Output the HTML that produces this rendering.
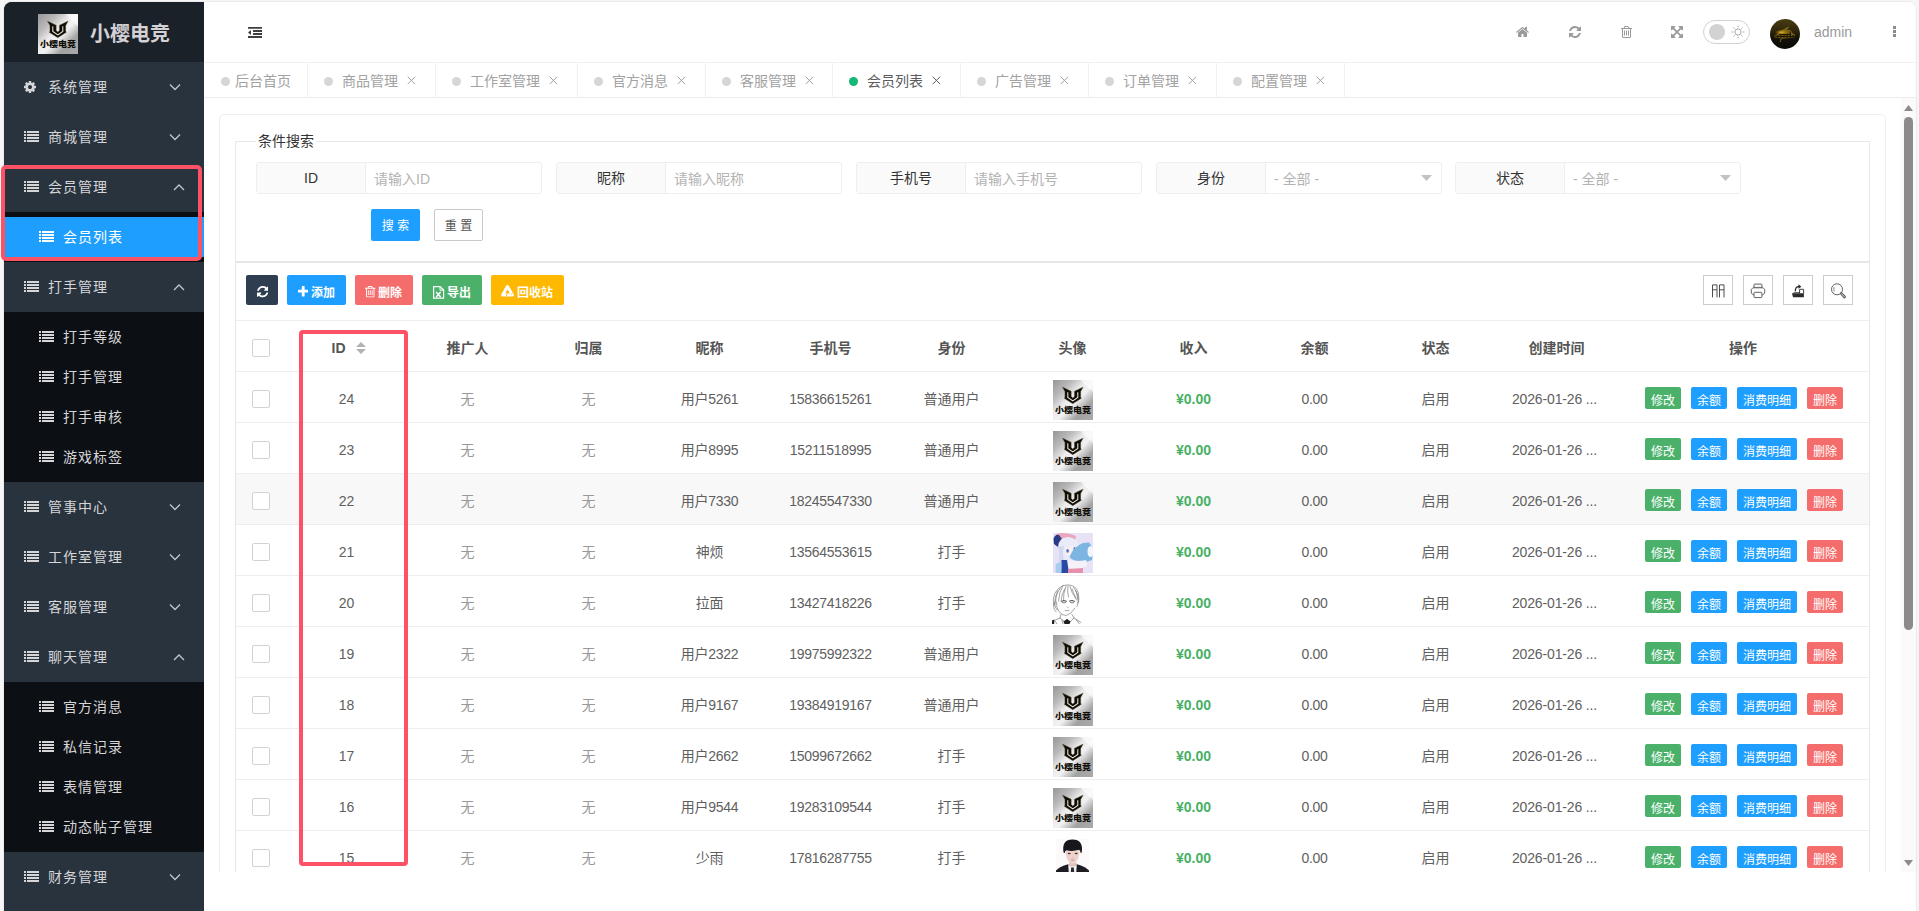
<!DOCTYPE html>
<html lang="zh-CN">
<head>
<meta charset="utf-8">
<title>小樱电竞 - 会员列表</title>
<style>
*{box-sizing:border-box;margin:0;padding:0}
html,body{width:1919px;height:911px;overflow:hidden;background:#f6f6f6}
body{font-family:"Liberation Sans","Noto Sans CJK SC",sans-serif;font-size:14px;color:#5f5f5f;position:relative}
ul{list-style:none}
svg{display:block}
.abs{position:absolute}
/* window frame */
#win{position:absolute;left:4px;top:2px;width:1912px;height:915px;background:#fff;border-radius:8px 8px 0 0;overflow:hidden;box-shadow:0 0 0 1px #ebebeb}
/* ---------- sidebar ---------- */
#side{position:absolute;left:0;top:0;width:200px;height:915px;background:#28333e;color:#d6d5d8}
#logo{height:60px;background:#1b2129;position:relative}
#logo .limg{position:absolute;left:34px;top:12px;width:40px;height:40px}
#logo h1{position:absolute;left:86px;top:2px;line-height:60px;font-size:20px;font-weight:bold;color:#d3d1d4;letter-spacing:0;white-space:nowrap}
.nav-item{position:relative;height:50px;line-height:50px;font-size:14px;letter-spacing:1px;white-space:nowrap}
.nav-item .t{position:absolute;left:44px;top:0}
.nav-item .ic{position:absolute;left:20px;top:19px}
.nav-item .chev{position:absolute;top:21px;width:12px;height:10px;color:#c4c6c9}
.nav-item .chev.down{left:165px;top:20px}
.nav-item .chev.up{left:169px}
.nav-child{background:#0c0f13;padding:5px 0}
.nav-child li{position:relative;height:40px;line-height:40px;letter-spacing:1px;white-space:nowrap}
.nav-child li .t{position:absolute;left:59px;top:0}
.nav-child li .ic{position:absolute;left:35px;top:14px}
.nav-child li.on{background:#1e9fff;color:#fff}
.ic{width:15px;height:11px;display:block;position:relative}
.ic:before,.ic:after{content:"";position:absolute;top:0;height:11px;background:repeating-linear-gradient(to bottom,currentColor 0,currentColor 2px,transparent 2px,transparent 3px)}
.ic:before{left:0;width:2.3px}
.ic:after{left:3px;width:11.7px}
/* ---------- header ---------- */
#head{position:absolute;left:200px;top:0;width:1712px;height:61px;background:#fff;border-bottom:1px solid #f1f1f1}
#tabs{position:absolute;left:200px;top:61px;width:1712px;height:35px;background:#fff;border-bottom:1px solid #ececec;box-shadow:0 1px 2px rgba(0,0,0,.04)}
.tab{position:absolute;top:0;height:34px;line-height:36px;border-right:1px solid #f1f1f1;color:#a2a2a2;font-size:14px;white-space:nowrap}
.tab .dot{position:absolute;top:14px;width:9px;height:9px;border-radius:50%;background:#d6d6d6}
.tab .tt{position:absolute;top:0}
.tab .x{position:absolute;top:13px;width:9px;height:9px}
.tab.on{color:#5c5c5c}
.tab.on .dot{background:#16b777}
/* ---------- body ---------- */
#main{position:absolute;left:200px;top:96px;width:1697px;height:774px;background:#fff;overflow:hidden}
#sbar{position:absolute;left:1897px;top:96px;width:15px;height:774px;background:#fafafa}
#sbar .thumb{position:absolute;left:3px;top:19px;width:9px;height:513px;border-radius:5px;background:#8b8b8b}
#card{position:absolute;left:15px;top:16px;width:1667px;height:900px;border:1px solid #eee;border-radius:5px;background:#fff}

.fs{border:1px solid #e8e8e8;border-bottom:1px solid #e6e6e6}
.legend{background:#fff;padding:0 2px;font-size:14px;line-height:22px;color:#333}
.grp{width:286px;height:32px;border:1px solid #eee;border-radius:3px;background:#fff}
.grp .lab{position:absolute;left:0;top:0;width:109px;height:30px;line-height:31px;text-align:center;background:#fafafa;border-right:1px solid #eee;color:#333;font-size:14px}
.grp .ph{position:absolute;left:117px;top:0;line-height:33px;color:#b3b3b3;font-size:14px;white-space:nowrap}
.btn-s{width:49px;height:32px;line-height:34px;background:#1e9fff;color:#fff;font-size:12px;text-align:center;border-radius:2px;white-space:nowrap}
.btn-r{width:49px;height:32px;line-height:32px;background:#fff;border:1px solid #c9c9c9;color:#555;font-size:12px;text-align:center;border-radius:2px;white-space:nowrap}
.tv{border:1px solid #e6e6e6;border-bottom:none}
.tb{height:30px;border-radius:2px;color:#fff}
.tb .bt{top:0;line-height:37px;font-size:12px;font-weight:bold;white-space:nowrap}
.tool{width:30px;height:30px;border:1px solid #ccc;background:#fff}
.hl{height:1px;background:#eee}
.c{text-align:center;white-space:nowrap;font-size:14px;color:#5f5f5f;overflow:hidden}
.c.th{font-weight:bold;color:#555}
.c.mut{color:#999}
.c.num{letter-spacing:-0.3px}
.c.num2{letter-spacing:-0.15px}
.c.inc{color:#47b065;font-weight:bold}
.cb{position:absolute;left:16px;top:18px;width:18px;height:18px;border:1px solid #d2d2d2;border-radius:2px;background:#fff}
.op{position:absolute;top:15px;height:22px;line-height:28px;border-radius:2px;color:#fff;font-size:12px;text-align:center}
.annot{position:absolute;border:4px solid #fd5266;pointer-events:none}
</style>
</head>
<body>
<div id="win">
  <div id="side">
    <div id="logo"><span class="limg"><svg class="" width="40" height="40" viewBox="0 0 40 40"><defs><linearGradient id="lg1" x1="0" y1="0" x2="1" y2="1"><stop offset="0" stop-color="#969696"/><stop offset="0.25" stop-color="#bababa"/><stop offset="0.44" stop-color="#ededed"/><stop offset="0.56" stop-color="#f1f1f1"/><stop offset="0.76" stop-color="#a2a2a2"/><stop offset="1" stop-color="#aaaaaa"/></linearGradient></defs><rect width="40" height="40" fill="url(#lg1)"/><path d="M27.5 0H40V12Z" fill="#fff" opacity="0.6"/><path d="M9.4 7 L18.2 11.2 V16.4 L19.8 17.9 L21.4 16.4 V11.2 L30.2 7 L27.7 11.6 V17.3 L28.4 18.3 L19.8 23.8 L11.2 18.3 L11.9 17.3 V11.6 Z" fill="#0e0c07" stroke="#6b5d3a" stroke-width="0.4"/><path d="M14.8 12.2 V17.5 L19.8 20.9 L24.8 17.5 V12.2" fill="none" stroke="#efe9d8" stroke-width="1.05"/><text x="20" y="33.3" text-anchor="middle" font-family="Noto Sans CJK SC, sans-serif" font-weight="900" font-size="8" textLength="36" lengthAdjust="spacingAndGlyphs" fill="#100d07">小樱电竞</text></svg></span><h1>小樱电竞</h1></div>
    <ul id="nav"><li class="nav-item"><span class="abs" style="left:20px;top:18px"><svg width="12.0" height="14" viewBox="128 0 1536 1792" style=""><path d="M1152 896q0-106-75-181t-181-75-181 75-75 181 75 181 181 75 181-75 75-181zm512-109v222q0 12-8 23t-20 13l-185 28q-19 54-39 91 35 50 107 138 10 12 10 25t-9 23q-27 37-99 108t-94 71q-12 0-26-9l-138-108q-44 23-91 38-16 136-29 186-7 28-36 28h-222q-14 0-24.500-8.500t-11.500-21.500l-28-184q-49-16-90-37l-141 107q-10 9-25 9-14 0-25-11-126-114-165-168-7-10-7-23 0-12 8-23 15-21 51-66.500t54-70.500q-27-50-41-99l-183-27q-13-2-21-12.500t-8-23.500v-222q0-12 8-23t19-13l186-28q14-46 39-92-40-57-107-138-10-12-10-24 0-10 9-23 26-36 98.500-107.500t94.500-71.500q13 0 26 10l138 107q44-23 91-38 16-136 29-186 7-28 36-28h222q14 0 24.500 8.500t11.500 21.500l28 184q49 16 90 37l142-107q9-9 24-9 13 0 25 10 129 119 165 170 7 8 7 22 0 12-8 23-15 21-51 66.500t-54 70.500q26 50 41 98l183 28q13 2 21 12.500t8 23.500z" fill="currentColor"/></svg></span><span class="t">系统管理</span><span class="chev down"><svg width="12" height="10" viewBox="0 0 12 10"><path d="M1 2.5 L6 7.5 L11 2.5" fill="none" stroke="currentColor" stroke-width="1.3"/></svg></span></li><li class="nav-item"><i class="ic"></i><span class="t">商城管理</span><span class="chev down"><svg width="12" height="10" viewBox="0 0 12 10"><path d="M1 2.5 L6 7.5 L11 2.5" fill="none" stroke="currentColor" stroke-width="1.3"/></svg></span></li><li class="nav-item"><i class="ic"></i><span class="t">会员管理</span><span class="chev up"><svg width="12" height="10" viewBox="0 0 12 10"><path d="M1 7 L6 2 L11 7" fill="none" stroke="currentColor" stroke-width="1.3"/></svg></span></li><li><ul class="nav-child"><li class="on"><i class="ic"></i><span class="t">会员列表</span></li></ul></li><li class="nav-item"><i class="ic"></i><span class="t">打手管理</span><span class="chev up"><svg width="12" height="10" viewBox="0 0 12 10"><path d="M1 7 L6 2 L11 7" fill="none" stroke="currentColor" stroke-width="1.3"/></svg></span></li><li><ul class="nav-child"><li><i class="ic"></i><span class="t">打手等级</span></li><li><i class="ic"></i><span class="t">打手管理</span></li><li><i class="ic"></i><span class="t">打手审核</span></li><li><i class="ic"></i><span class="t">游戏标签</span></li></ul></li><li class="nav-item"><i class="ic"></i><span class="t">管事中心</span><span class="chev down"><svg width="12" height="10" viewBox="0 0 12 10"><path d="M1 2.5 L6 7.5 L11 2.5" fill="none" stroke="currentColor" stroke-width="1.3"/></svg></span></li><li class="nav-item"><i class="ic"></i><span class="t">工作室管理</span><span class="chev down"><svg width="12" height="10" viewBox="0 0 12 10"><path d="M1 2.5 L6 7.5 L11 2.5" fill="none" stroke="currentColor" stroke-width="1.3"/></svg></span></li><li class="nav-item"><i class="ic"></i><span class="t">客服管理</span><span class="chev down"><svg width="12" height="10" viewBox="0 0 12 10"><path d="M1 2.5 L6 7.5 L11 2.5" fill="none" stroke="currentColor" stroke-width="1.3"/></svg></span></li><li class="nav-item"><i class="ic"></i><span class="t">聊天管理</span><span class="chev up"><svg width="12" height="10" viewBox="0 0 12 10"><path d="M1 7 L6 2 L11 7" fill="none" stroke="currentColor" stroke-width="1.3"/></svg></span></li><li><ul class="nav-child"><li><i class="ic"></i><span class="t">官方消息</span></li><li><i class="ic"></i><span class="t">私信记录</span></li><li><i class="ic"></i><span class="t">表情管理</span></li><li><i class="ic"></i><span class="t">动态帖子管理</span></li></ul></li><li class="nav-item"><i class="ic"></i><span class="t">财务管理</span><span class="chev down"><svg width="12" height="10" viewBox="0 0 12 10"><path d="M1 2.5 L6 7.5 L11 2.5" fill="none" stroke="currentColor" stroke-width="1.3"/></svg></span></li></ul>
  </div>
  <div id="head"><svg class="abs" style="left:44px;top:25px" width="14" height="11" viewBox="0 0 14 11"><path d="M0 0H14V1.8H0Z M5 3.1H14V4.9H5Z M5 6.1H14V7.9H5Z M0 9.1H14V10.9H0Z M0 5.5 L3 3 V8Z" fill="#3f3f3f"/></svg><span class="abs" style="left:1311.5px;top:23px;color:#9a9a9a"><svg width="13.0" height="14" viewBox="64 0 1664 1792" style=""><path d="M1472 992v480q0 26-19 45t-45 19h-384v-384h-256v384h-384q-26 0-45-19t-19-45v-480q0-1 .5-3t.5-3l575-474 575 474q1 2 1 6zm223-69l-62 74q-8 9-21 11h-3q-13 0-21-7l-692-577-692 577q-12 8-24 7-13-2-21-11l-62-74q-8-10-7-23.5t11-21.5l719-599q32-26 76-26t76 26l244 204v-195q0-14 9-23t23-9h192q14 0 23 9t9 23v408l219 182q10 8 11 21.5t-7 23.5z" fill="currentColor"/></svg></span><span class="abs" style="left:1364.5px;top:23px;color:#9a9a9a"><svg width="12.0" height="14" viewBox="128 0 1536 1792" style=""><path d="M1639 1056q0 5-1 7-64 268-268 434.5t-478 166.5q-146 0-282.500-55t-243.500-157l-129 129q-19 19-45 19t-45-19-19-45v-448q0-26 19-45t45-19h448q26 0 45 19t19 45-19 45l-137 137q71 66 161 102t187 36q134 0 250-65t186-179q11-17 53-117 8-23 30-23h192q13 0 22.500 9.500t9.500 22.500zm25-800v448q0 26-19 45t-45 19h-448q-26 0-45-19t-19-45 19-45l138-138q-148-137-349-137-134 0-250 65t-186 179q-11 17-53 117-8 23-30 23h-199q-13 0-22.500-9.500t-9.500-22.500v-7q65-268 270-434.500t480-166.500q146 0 284 55.500t245 156.500l130-129q19-19 45-19t45 19 19 45z" fill="currentColor"/></svg></span><span class="abs" style="left:1416.5px;top:23px;color:#9a9a9a"><svg width="11.0" height="14" viewBox="192 0 1408 1792" style=""><path d="M704 736v576q0 14-9 23t-23 9h-64q-14 0-23-9t-9-23v-576q0-14 9-23t23-9h64q14 0 23 9t9 23zm256 0v576q0 14-9 23t-23 9h-64q-14 0-23-9t-9-23v-576q0-14 9-23t23-9h64q14 0 23 9t9 23zm256 0v576q0 14-9 23t-23 9h-64q-14 0-23-9t-9-23v-576q0-14 9-23t23-9h64q14 0 23 9t9 23zm128 724v-948h-896v948q0 22 7 40.500t14.500 27 10.500 8.500h832q3 0 10.500-8.500t14.500-27 7-40.500zm-672-1076h448l-48-117q-7-9-17-11h-317q-10 2-17 11zm928 32v64q0 14-9 23t-23 9h-96v948q0 83-47 143.500t-113 60.500h-832q-66 0-113-58.500t-47-141.500v-952h-96q-14 0-23-9t-9-23v-64q0-14 9-23t23-9h309l70-167q15-37 54-63t79-26h320q40 0 79 26t54 63l70 167h309q14 0 23 9t9 23z" fill="currentColor"/></svg></span><span class="abs" style="left:1466.5px;top:24px;color:#9a9a9a"><svg width="14.0" height="14" viewBox="0 0 1792 1792" style=""><path d="M1283 413l-355 355 355 355 144-144q29-31 70-14 39 17 39 59v448q0 26-19 45t-45 19h-448q-42 0-59-40-17-39 14-69l144-144-355-355-355 355 144 144q31 30 14 69-17 40-59 40h-448q-26 0-45-19t-19-45v-448q0-42 40-59 39-17 69 14l144 144 355-355-355-355-144 144q-19 19-45 19-12 0-24-5-40-17-40-59v-448q0-26 19-45t45-19h448q42 0 59 40 17 39-14 69l-144 144 355 355 355-355-144-144q-31-30-14-69 17-40 59-40h448q26 0 45 19t19 45v448q0 42-39 59-13 5-25 5-26 0-45-19z" fill="currentColor"/></svg></span><div class="abs" style="left:1499px;top:18px;width:47px;height:24px;border:1px solid #d2d2d2;border-radius:12px;background:#fff"><span class="abs" style="left:5px;top:3px;width:16px;height:16px;border-radius:50%;background:#d2d2d2"></span><svg class="abs" style="left:27px;top:4px" width="14" height="14" viewBox="0 0 14 14"><circle cx="7" cy="7" r="3.1" fill="none" stroke="#9a9a9a" stroke-width="0.9"/><path d="M7 0.6V2.2 M7 11.8V13.4 M0.6 7H2.2 M11.8 7H13.4 M2.5 2.5L3.6 3.6 M10.4 10.4L11.5 11.5 M2.5 11.5L3.6 10.4 M10.4 3.6L11.5 2.5" stroke="#9a9a9a" stroke-width="0.9"/></svg></div><span class="abs" style="left:1566px;top:17px"><svg width="30" height="30" viewBox="0 0 30 30"><defs><linearGradient id="adl" x1="0" y1="0" x2="0" y2="1"><stop offset="0" stop-color="#4a3c12"/><stop offset="0.4" stop-color="#2e260c"/><stop offset="0.62" stop-color="#15120a"/><stop offset="1" stop-color="#0a0906"/></linearGradient><radialGradient id="adg" cx="0.5" cy="0.5" r="0.5"><stop offset="0" stop-color="#ffe45a"/><stop offset="0.3" stop-color="#e0aa18" stop-opacity="0.95"/><stop offset="1" stop-color="#8a6a10" stop-opacity="0"/></radialGradient><filter id="adb"><feGaussianBlur stdDeviation="0.5"/></filter><clipPath id="adc"><circle cx="15" cy="15" r="15"/></clipPath></defs><circle cx="15" cy="15" r="15" fill="url(#adl)"/><g clip-path="url(#adc)" filter="url(#adb)"><ellipse cx="11.8" cy="13.6" rx="7" ry="3.4" fill="url(#adg)" opacity="0.9"/><path d="M12 11 L18.5 7.6 L19 8.6 L17 10.5 L21 11.5 L22.5 14 L25 15.5 L24.8 18.5 L20 19 L12 20 L10.5 23.5 L9.5 23 L10.8 19.5 L4.5 18.6 L4.5 16.2 L9 14.5 Z" fill="#b08a1c" opacity="0.55"/><path d="M5 17.4 H25 M9 15.4 H21" stroke="#1a1406" stroke-width="1"/><path d="M8 16 V19 M11 16 V19.5 M14 15 V19.5 M17 15 V19.5 M20.3 12.5 V19 M23 16 V18.8" stroke="#1a1406" stroke-width="0.9"/></g></svg></span><span class="abs" style="left:1610px;top:0;line-height:60px;font-size:14px;color:#9a9a9a">admin</span><svg class="abs" style="left:1689px;top:24px" width="3" height="11" viewBox="0 0 3 11"><path d="M0 0H3V3H0Z M0 4H3V7H0Z M0 8H3V11H0Z" fill="#8a8a92"/></svg></div>
  <div id="tabs"><div class="tab" style="left:0px;width:104px"><i class="dot" style="left:17px"></i><span class="tt" style="left:31px">后台首页</span></div><div class="tab" style="left:104px;width:128px"><i class="dot" style="left:16px"></i><span class="tt" style="left:34px">商品管理</span><span class="x" style="left:99px"><svg width="9" height="9" viewBox="0 0 9 9"><path d="M0.7 0.7 L8.1 8.1 M8.1 0.7 L0.7 8.1" stroke="currentColor" stroke-width="1" fill="none"/></svg></span></div><div class="tab" style="left:232px;width:142px"><i class="dot" style="left:16px"></i><span class="tt" style="left:34px">工作室管理</span><span class="x" style="left:113px"><svg width="9" height="9" viewBox="0 0 9 9"><path d="M0.7 0.7 L8.1 8.1 M8.1 0.7 L0.7 8.1" stroke="currentColor" stroke-width="1" fill="none"/></svg></span></div><div class="tab" style="left:374px;width:128px"><i class="dot" style="left:16px"></i><span class="tt" style="left:34px">官方消息</span><span class="x" style="left:99px"><svg width="9" height="9" viewBox="0 0 9 9"><path d="M0.7 0.7 L8.1 8.1 M8.1 0.7 L0.7 8.1" stroke="currentColor" stroke-width="1" fill="none"/></svg></span></div><div class="tab" style="left:502px;width:127px"><i class="dot" style="left:16px"></i><span class="tt" style="left:34px">客服管理</span><span class="x" style="left:99px"><svg width="9" height="9" viewBox="0 0 9 9"><path d="M0.7 0.7 L8.1 8.1 M8.1 0.7 L0.7 8.1" stroke="currentColor" stroke-width="1" fill="none"/></svg></span></div><div class="tab on" style="left:629px;width:128px"><i class="dot" style="left:16px"></i><span class="tt" style="left:34px">会员列表</span><span class="x" style="left:99px"><svg width="9" height="9" viewBox="0 0 9 9"><path d="M0.7 0.7 L8.1 8.1 M8.1 0.7 L0.7 8.1" stroke="currentColor" stroke-width="1" fill="none"/></svg></span></div><div class="tab" style="left:757px;width:128px"><i class="dot" style="left:16px"></i><span class="tt" style="left:34px">广告管理</span><span class="x" style="left:99px"><svg width="9" height="9" viewBox="0 0 9 9"><path d="M0.7 0.7 L8.1 8.1 M8.1 0.7 L0.7 8.1" stroke="currentColor" stroke-width="1" fill="none"/></svg></span></div><div class="tab" style="left:885px;width:128px"><i class="dot" style="left:16px"></i><span class="tt" style="left:34px">订单管理</span><span class="x" style="left:99px"><svg width="9" height="9" viewBox="0 0 9 9"><path d="M0.7 0.7 L8.1 8.1 M8.1 0.7 L0.7 8.1" stroke="currentColor" stroke-width="1" fill="none"/></svg></span></div><div class="tab" style="left:1013px;width:128px"><i class="dot" style="left:16px"></i><span class="tt" style="left:34px">配置管理</span><span class="x" style="left:99px"><svg width="9" height="9" viewBox="0 0 9 9"><path d="M0.7 0.7 L8.1 8.1 M8.1 0.7 L0.7 8.1" stroke="currentColor" stroke-width="1" fill="none"/></svg></span></div></div>
  <div id="main">
    <div id="card"><div class="abs fs" style="left:15px;top:26px;width:1635px;height:121px"></div><div class="abs legend" style="left:36px;top:15px">条件搜索</div><div class="abs grp" style="left:36px;top:47px"><span class="lab">ID</span><span class="ph">请输入ID</span></div><div class="abs grp" style="left:336px;top:47px"><span class="lab">昵称</span><span class="ph">请输入昵称</span></div><div class="abs grp" style="left:636px;top:47px"><span class="lab">手机号</span><span class="ph">请输入手机号</span></div><div class="abs grp" style="left:936px;top:47px"><span class="lab">身份</span><span class="ph">- 全部 -</span><svg class="abs" style="left:264px;top:12px" width="11" height="6" viewBox="0 0 11 6"><path d="M0 0H11L5.5 6Z" fill="#c2c2c2"/></svg></div><div class="abs grp" style="left:1235px;top:47px"><span class="lab">状态</span><span class="ph">- 全部 -</span><svg class="abs" style="left:264px;top:12px" width="11" height="6" viewBox="0 0 11 6"><path d="M0 0H11L5.5 6Z" fill="#c2c2c2"/></svg></div><div class="abs btn-s" style="left:151px;top:94px">搜 索</div><div class="abs btn-r" style="left:214px;top:94px">重 置</div><div class="abs tv" style="left:15px;top:147px;width:1635px;height:700px"></div><div class="abs tb" style="left:26px;top:160px;width:32px;background:#2f3d50"><span class="abs" style="left:10.5px;top:10px;color:#fff"><svg width="11.4" height="13.3" viewBox="128 0 1536 1792" style=""><path d="M1639 1056q0 5-1 7-64 268-268 434.5t-478 166.5q-146 0-282.500-55t-243.500-157l-129 129q-19 19-45 19t-45-19-19-45v-448q0-26 19-45t45-19h448q26 0 45 19t19 45-19 45l-137 137q71 66 161 102t187 36q134 0 250-65t186-179q11-17 53-117 8-23 30-23h192q13 0 22.500 9.500t9.500 22.500zm25-800v448q0 26-19 45t-45 19h-448q-26 0-45-19t-19-45 19-45l138-138q-148-137-349-137-134 0-250 65t-186 179q-11 17-53 117-8 23-30 23h-199q-13 0-22.500-9.500t-9.500-22.500v-7q65-268 270-434.500t480-166.500q146 0 284 55.500t245 156.500l130-129q19-19 45-19t45 19 19 45z" fill="currentColor"/></svg></span></div><div class="abs tb" style="left:67px;top:160px;width:59px;background:#1e9fff"><span class="abs" style="left:11px;top:10.2px;color:#fff"><svg width="10.45" height="13.3" viewBox="192 0 1408 1792" style=""><path d="M1600 736v192q0 40-28 68t-68 28h-416v416q0 40-28 68t-68 28h-192q-40 0-68-28t-28-68v-416h-416q-40 0-68-28t-28-68v-192q0-40 28-68t68-28h416v-416q0-40 28-68t68-28h192q40 0 68 28t28 68v416h416q40 0 68 28t28 68z" fill="currentColor"/></svg></span><span class="abs bt" style="left:24px">添加</span></div><div class="abs tb" style="left:135px;top:160px;width:58px;background:#f56c6c"><span class="abs" style="left:10.2px;top:10.2px;color:#fff"><svg width="10.45" height="13.3" viewBox="192 0 1408 1792" style=""><path d="M704 736v576q0 14-9 23t-23 9h-64q-14 0-23-9t-9-23v-576q0-14 9-23t23-9h64q14 0 23 9t9 23zm256 0v576q0 14-9 23t-23 9h-64q-14 0-23-9t-9-23v-576q0-14 9-23t23-9h64q14 0 23 9t9 23zm256 0v576q0 14-9 23t-23 9h-64q-14 0-23-9t-9-23v-576q0-14 9-23t23-9h64q14 0 23 9t9 23zm128 724v-948h-896v948q0 22 7 40.500t14.500 27 10.500 8.500h832q3 0 10.500-8.500t14.500-27 7-40.500zm-672-1076h448l-48-117q-7-9-17-11h-317q-10 2-17 11zm928 32v64q0 14-9 23t-23 9h-96v948q0 83-47 143.500t-113 60.500h-832q-66 0-113-58.500t-47-141.500v-952h-96q-14 0-23-9t-9-23v-64q0-14 9-23t23-9h309l70-167q15-37 54-63t79-26h320q40 0 79 26t54 63l70 167h309q14 0 23 9t9 23z" fill="currentColor"/></svg></span><span class="abs bt" style="left:23px">删除</span></div><div class="abs tb" style="left:202px;top:160px;width:60px;background:#4bb16a"><span class="abs" style="left:10.5px;top:10.5px"><svg width="12" height="13" viewBox="0 0 12 13"><path d="M0.6 0.6H7.2L10.6 4V12.2H0.6Z" fill="none" stroke="#fff" stroke-width="1.2" stroke-linejoin="round"/><path d="M7 0.8V4.2H10.4" fill="none" stroke="#fff" stroke-width="1"/><path d="M3.2 5.9L7.6 11 M7.6 5.9L3.2 11" stroke="#fff" stroke-width="1.5"/></svg></span><span class="abs bt" style="left:25px">导出</span></div><div class="abs tb" style="left:271px;top:160px;width:73px;background:#ffb800"><span class="abs" style="left:10.2px;top:10px"><svg width="13" height="12" viewBox="0 0 13 12"><path d="M6.5 1.6L11.3 9.9H1.7Z" fill="none" stroke="#fff" stroke-width="3.1" stroke-linejoin="round"/><path d="M6.5 4.6L8.6 8.3H4.4Z" fill="#ffb800"/><path d="M8.6 2.2L10.6 1.4 M11.6 8.2L10 9.6 M2.4 5.4L0.6 6.6 M5.6 11.6V9" stroke="#ffb800" stroke-width="0.9"/></svg></span><span class="abs bt" style="left:26px">回收站</span></div><div class="abs tool" style="left:1483px;top:160px"><svg width="16" height="16" viewBox="0 0 16 16" class="abs" style="left:7px;top:7px"><g fill="none" stroke="#3a3a3a" stroke-width="0.9"><path d="M1.5 14.4V1.9H6V14.4 M1.5 6.8H6"/><path d="M8.5 14.4V1.9H13V14.4 M8.5 6.8H13"/></g></svg></div><div class="abs tool" style="left:1523px;top:160px"><svg width="16" height="16" viewBox="0 0 16 16" class="abs" style="left:6px;top:7px"><g fill="none" stroke="#5a5a5a" stroke-width="0.95"><path d="M4 4.4V1.6Q4 1.1 4.5 1.1H11.4Q11.9 1.1 11.9 1.6V4.4"/><path d="M3.3 4.4H12.7L14.7 6.4V10L12.7 12H11.9 M4 12H3.3L1.3 10V6.4L3.3 4.4"/><path d="M3 5.6H13" stroke="#c8c8c8"/><rect x="4" y="9.3" width="7.9" height="5.3" rx="0.7" fill="#fff"/></g></svg></div><div class="abs tool" style="left:1563px;top:160px"><svg width="16" height="16" viewBox="0 0 16 16" class="abs" style="left:6px;top:7px"><path d="M9.6 10.2V6.3H13.6V10.4" fill="none" stroke="#2b2b2b" stroke-width="0.9"/><path d="M1.9 10.2H13.9V14.2H3.1Z" fill="#2b2b2b"/><path d="M3.6 9.6H10" stroke="#2b2b2b" stroke-width="0.8"/><path d="M5.4 8.2Q5 3.8 9 3.5" fill="none" stroke="#2b2b2b" stroke-width="1.3"/><path d="M8.5 1.2L11.4 3.7L8.5 5.8Z" fill="#2b2b2b"/></svg></div><div class="abs tool" style="left:1603px;top:160px"><svg width="17" height="17" viewBox="0 0 17 17" class="abs" style="left:6px;top:6px"><circle cx="7" cy="7.3" r="5.5" fill="none" stroke="#505050" stroke-width="0.9"/><path d="M4.2 5.2Q3.4 7.3 4.2 9.4" fill="none" stroke="#505050" stroke-width="0.7"/><path d="M11.2 11.4L14.6 15" stroke="#505050" stroke-width="2.6" stroke-linecap="round"/><path d="M11.4 11.6L14.5 14.9" stroke="#fff" stroke-width="0.9" stroke-linecap="round"/></svg></div><div class="abs hl" style="left:16px;top:205px;width:1633px"></div><div class="abs c " style="left:16px;top:206px;width:50px;height:50px;line-height:54px"><i class="cb"></i></div><div class="abs c th" style="left:66px;top:206px;width:121px;height:50px;line-height:54px"><span style="position:relative;left:-8px">ID</span><svg class="abs" style="left:70px;top:21px" width="10" height="12" viewBox="0 0 10 12"><path d="M5 0L10 5H0Z M0 7H10L5 12Z" fill="#b2b2b2"/></svg></div><div class="abs c th" style="left:187px;top:206px;width:121px;height:50px;line-height:54px">推广人</div><div class="abs c th" style="left:308px;top:206px;width:121px;height:50px;line-height:54px">归属</div><div class="abs c th" style="left:429px;top:206px;width:121px;height:50px;line-height:54px">昵称</div><div class="abs c th" style="left:550px;top:206px;width:121px;height:50px;line-height:54px">手机号</div><div class="abs c th" style="left:671px;top:206px;width:121px;height:50px;line-height:54px">身份</div><div class="abs c th" style="left:792px;top:206px;width:121px;height:50px;line-height:54px">头像</div><div class="abs c th" style="left:913px;top:206px;width:121px;height:50px;line-height:54px">收入</div><div class="abs c th" style="left:1034px;top:206px;width:121px;height:50px;line-height:54px">余额</div><div class="abs c th" style="left:1155px;top:206px;width:121px;height:50px;line-height:54px">状态</div><div class="abs c th" style="left:1276px;top:206px;width:121px;height:50px;line-height:54px">创建时间</div><div class="abs c th" style="left:1397px;top:206px;width:252px;height:50px;line-height:54px">操作</div><div class="abs hl" style="left:16px;top:256px;width:1633px"></div><div class="abs c " style="left:16px;top:257px;width:50px;height:50px;line-height:54px"><i class="cb"></i></div><div class="abs c " style="left:66px;top:257px;width:121px;height:50px;line-height:54px">24</div><div class="abs c mut" style="left:187px;top:257px;width:121px;height:50px;line-height:54px">无</div><div class="abs c mut" style="left:308px;top:257px;width:121px;height:50px;line-height:54px">无</div><div class="abs c num" style="left:429px;top:257px;width:121px;height:50px;line-height:54px">用户5261</div><div class="abs c num" style="left:550px;top:257px;width:121px;height:50px;line-height:54px">15836615261</div><div class="abs c " style="left:671px;top:257px;width:121px;height:50px;line-height:54px">普通用户</div><div class="abs c " style="left:792px;top:257px;width:121px;height:50px;line-height:54px"><span class="abs" style="left:41px;top:8px"><svg class="" width="40" height="40" viewBox="0 0 40 40"><defs><linearGradient id="lg2" x1="0" y1="0" x2="1" y2="1"><stop offset="0" stop-color="#969696"/><stop offset="0.25" stop-color="#bababa"/><stop offset="0.44" stop-color="#ededed"/><stop offset="0.56" stop-color="#f1f1f1"/><stop offset="0.76" stop-color="#a2a2a2"/><stop offset="1" stop-color="#aaaaaa"/></linearGradient></defs><rect width="40" height="40" fill="url(#lg2)"/><path d="M27.5 0H40V12Z" fill="#fff" opacity="0.6"/><path d="M9.4 7 L18.2 11.2 V16.4 L19.8 17.9 L21.4 16.4 V11.2 L30.2 7 L27.7 11.6 V17.3 L28.4 18.3 L19.8 23.8 L11.2 18.3 L11.9 17.3 V11.6 Z" fill="#0e0c07" stroke="#6b5d3a" stroke-width="0.4"/><path d="M14.8 12.2 V17.5 L19.8 20.9 L24.8 17.5 V12.2" fill="none" stroke="#efe9d8" stroke-width="1.05"/><text x="20" y="33.3" text-anchor="middle" font-family="Noto Sans CJK SC, sans-serif" font-weight="900" font-size="8" textLength="36" lengthAdjust="spacingAndGlyphs" fill="#100d07">小樱电竞</text></svg></span></div><div class="abs c inc" style="left:913px;top:257px;width:121px;height:50px;line-height:54px">¥0.00</div><div class="abs c num" style="left:1034px;top:257px;width:121px;height:50px;line-height:54px">0.00</div><div class="abs c " style="left:1155px;top:257px;width:121px;height:50px;line-height:54px">启用</div><div class="abs c num2" style="left:1276px;top:257px;width:121px;height:50px;line-height:54px"><span style="position:relative;left:-2px">2026-01-26 ...</span></div><div class="abs c " style="left:1397px;top:257px;width:252px;height:50px;line-height:54px"><span class="op" style="left:28px;width:36px;background:#4bb16a">修改</span><span class="op" style="left:74px;width:36px;background:#1e9fff">余额</span><span class="op" style="left:120px;width:60px;background:#1e9fff">消费明细</span><span class="op" style="left:190px;width:36px;background:#f56c6c">删除</span></div><div class="abs hl" style="left:16px;top:307px;width:1633px"></div><div class="abs c " style="left:16px;top:308px;width:50px;height:50px;line-height:54px"><i class="cb"></i></div><div class="abs c " style="left:66px;top:308px;width:121px;height:50px;line-height:54px">23</div><div class="abs c mut" style="left:187px;top:308px;width:121px;height:50px;line-height:54px">无</div><div class="abs c mut" style="left:308px;top:308px;width:121px;height:50px;line-height:54px">无</div><div class="abs c num" style="left:429px;top:308px;width:121px;height:50px;line-height:54px">用户8995</div><div class="abs c num" style="left:550px;top:308px;width:121px;height:50px;line-height:54px">15211518995</div><div class="abs c " style="left:671px;top:308px;width:121px;height:50px;line-height:54px">普通用户</div><div class="abs c " style="left:792px;top:308px;width:121px;height:50px;line-height:54px"><span class="abs" style="left:41px;top:8px"><svg class="" width="40" height="40" viewBox="0 0 40 40"><defs><linearGradient id="lg3" x1="0" y1="0" x2="1" y2="1"><stop offset="0" stop-color="#969696"/><stop offset="0.25" stop-color="#bababa"/><stop offset="0.44" stop-color="#ededed"/><stop offset="0.56" stop-color="#f1f1f1"/><stop offset="0.76" stop-color="#a2a2a2"/><stop offset="1" stop-color="#aaaaaa"/></linearGradient></defs><rect width="40" height="40" fill="url(#lg3)"/><path d="M27.5 0H40V12Z" fill="#fff" opacity="0.6"/><path d="M9.4 7 L18.2 11.2 V16.4 L19.8 17.9 L21.4 16.4 V11.2 L30.2 7 L27.7 11.6 V17.3 L28.4 18.3 L19.8 23.8 L11.2 18.3 L11.9 17.3 V11.6 Z" fill="#0e0c07" stroke="#6b5d3a" stroke-width="0.4"/><path d="M14.8 12.2 V17.5 L19.8 20.9 L24.8 17.5 V12.2" fill="none" stroke="#efe9d8" stroke-width="1.05"/><text x="20" y="33.3" text-anchor="middle" font-family="Noto Sans CJK SC, sans-serif" font-weight="900" font-size="8" textLength="36" lengthAdjust="spacingAndGlyphs" fill="#100d07">小樱电竞</text></svg></span></div><div class="abs c inc" style="left:913px;top:308px;width:121px;height:50px;line-height:54px">¥0.00</div><div class="abs c num" style="left:1034px;top:308px;width:121px;height:50px;line-height:54px">0.00</div><div class="abs c " style="left:1155px;top:308px;width:121px;height:50px;line-height:54px">启用</div><div class="abs c num2" style="left:1276px;top:308px;width:121px;height:50px;line-height:54px"><span style="position:relative;left:-2px">2026-01-26 ...</span></div><div class="abs c " style="left:1397px;top:308px;width:252px;height:50px;line-height:54px"><span class="op" style="left:28px;width:36px;background:#4bb16a">修改</span><span class="op" style="left:74px;width:36px;background:#1e9fff">余额</span><span class="op" style="left:120px;width:60px;background:#1e9fff">消费明细</span><span class="op" style="left:190px;width:36px;background:#f56c6c">删除</span></div><div class="abs hl" style="left:16px;top:358px;width:1633px"></div><div class="abs" style="left:16px;top:359px;width:1633px;height:50px;background:#f8f8f8"></div><div class="abs c " style="left:16px;top:359px;width:50px;height:50px;line-height:54px"><i class="cb"></i></div><div class="abs c " style="left:66px;top:359px;width:121px;height:50px;line-height:54px">22</div><div class="abs c mut" style="left:187px;top:359px;width:121px;height:50px;line-height:54px">无</div><div class="abs c mut" style="left:308px;top:359px;width:121px;height:50px;line-height:54px">无</div><div class="abs c num" style="left:429px;top:359px;width:121px;height:50px;line-height:54px">用户7330</div><div class="abs c num" style="left:550px;top:359px;width:121px;height:50px;line-height:54px">18245547330</div><div class="abs c " style="left:671px;top:359px;width:121px;height:50px;line-height:54px">普通用户</div><div class="abs c " style="left:792px;top:359px;width:121px;height:50px;line-height:54px"><span class="abs" style="left:41px;top:8px"><svg class="" width="40" height="40" viewBox="0 0 40 40"><defs><linearGradient id="lg4" x1="0" y1="0" x2="1" y2="1"><stop offset="0" stop-color="#969696"/><stop offset="0.25" stop-color="#bababa"/><stop offset="0.44" stop-color="#ededed"/><stop offset="0.56" stop-color="#f1f1f1"/><stop offset="0.76" stop-color="#a2a2a2"/><stop offset="1" stop-color="#aaaaaa"/></linearGradient></defs><rect width="40" height="40" fill="url(#lg4)"/><path d="M27.5 0H40V12Z" fill="#fff" opacity="0.6"/><path d="M9.4 7 L18.2 11.2 V16.4 L19.8 17.9 L21.4 16.4 V11.2 L30.2 7 L27.7 11.6 V17.3 L28.4 18.3 L19.8 23.8 L11.2 18.3 L11.9 17.3 V11.6 Z" fill="#0e0c07" stroke="#6b5d3a" stroke-width="0.4"/><path d="M14.8 12.2 V17.5 L19.8 20.9 L24.8 17.5 V12.2" fill="none" stroke="#efe9d8" stroke-width="1.05"/><text x="20" y="33.3" text-anchor="middle" font-family="Noto Sans CJK SC, sans-serif" font-weight="900" font-size="8" textLength="36" lengthAdjust="spacingAndGlyphs" fill="#100d07">小樱电竞</text></svg></span></div><div class="abs c inc" style="left:913px;top:359px;width:121px;height:50px;line-height:54px">¥0.00</div><div class="abs c num" style="left:1034px;top:359px;width:121px;height:50px;line-height:54px">0.00</div><div class="abs c " style="left:1155px;top:359px;width:121px;height:50px;line-height:54px">启用</div><div class="abs c num2" style="left:1276px;top:359px;width:121px;height:50px;line-height:54px"><span style="position:relative;left:-2px">2026-01-26 ...</span></div><div class="abs c " style="left:1397px;top:359px;width:252px;height:50px;line-height:54px"><span class="op" style="left:28px;width:36px;background:#4bb16a">修改</span><span class="op" style="left:74px;width:36px;background:#1e9fff">余额</span><span class="op" style="left:120px;width:60px;background:#1e9fff">消费明细</span><span class="op" style="left:190px;width:36px;background:#f56c6c">删除</span></div><div class="abs hl" style="left:16px;top:409px;width:1633px"></div><div class="abs c " style="left:16px;top:410px;width:50px;height:50px;line-height:54px"><i class="cb"></i></div><div class="abs c " style="left:66px;top:410px;width:121px;height:50px;line-height:54px">21</div><div class="abs c mut" style="left:187px;top:410px;width:121px;height:50px;line-height:54px">无</div><div class="abs c mut" style="left:308px;top:410px;width:121px;height:50px;line-height:54px">无</div><div class="abs c num" style="left:429px;top:410px;width:121px;height:50px;line-height:54px">神烦</div><div class="abs c num" style="left:550px;top:410px;width:121px;height:50px;line-height:54px">13564553615</div><div class="abs c " style="left:671px;top:410px;width:121px;height:50px;line-height:54px">打手</div><div class="abs c " style="left:792px;top:410px;width:121px;height:50px;line-height:54px"><span class="abs" style="left:41px;top:8px"><svg width="40" height="40" viewBox="0 0 40 40"><defs><filter id="blA" x="-5%" y="-5%" width="110%" height="110%"><feGaussianBlur stdDeviation="0.55"/></filter><clipPath id="clA"><rect width="40" height="40"/></clipPath></defs><rect width="40" height="40" fill="#e8e2f7"/><g filter="url(#blA)" clip-path="url(#clA)"><path d="M3 1 Q12 -2 23 3 L22 8 L8 9 Z" fill="#eaa6bb"/><path d="M0.5 6 Q2 1 6 2 L9 6 L10 12 L5 14 L1 11 Z" fill="#2c3a86"/><path d="M5 14 Q6 4 15 4 Q25 5 26 14 L24 24 L12 27 L6 24 Z" fill="#e9ebf9"/><path d="M5 14 Q8 24 4 32 L11 28 Q9 20 11 13Z" fill="#d3d7ef"/><path d="M12 15 Q17 12 23 14 Q24 20 20 23 Q15 24 12 21Z" fill="#fdeeee"/><ellipse cx="14.6" cy="17.8" rx="1.3" ry="1.9" fill="#3b6fc6"/><ellipse cx="21.6" cy="15.8" rx="1.1" ry="1.8" fill="#3b6fc6"/><path d="M16.5 24 Q20 14 30 10 L36 9.5 Q41 14 39 27 Q33 30 26 28 Q20 28 16.5 24Z" fill="#7bb4e2"/><ellipse cx="37.5" cy="18.5" rx="3" ry="5.5" fill="#f3f5fc"/><path d="M15 27 Q24 29 33 27 L34 33 L24 37 L15 35Z" fill="#f5f1f8"/><path d="M8.5 27 L14 27 L16 40 L8 40Z" fill="#2b4aa3"/><path d="M15 36 L30 35 L30 40 L15 40Z" fill="#e88eae"/><path d="M2.6 31 L8.5 29 L8.5 40 L2.6 40Z" fill="#a7ccf0"/></g></svg></span></div><div class="abs c inc" style="left:913px;top:410px;width:121px;height:50px;line-height:54px">¥0.00</div><div class="abs c num" style="left:1034px;top:410px;width:121px;height:50px;line-height:54px">0.00</div><div class="abs c " style="left:1155px;top:410px;width:121px;height:50px;line-height:54px">启用</div><div class="abs c num2" style="left:1276px;top:410px;width:121px;height:50px;line-height:54px"><span style="position:relative;left:-2px">2026-01-26 ...</span></div><div class="abs c " style="left:1397px;top:410px;width:252px;height:50px;line-height:54px"><span class="op" style="left:28px;width:36px;background:#4bb16a">修改</span><span class="op" style="left:74px;width:36px;background:#1e9fff">余额</span><span class="op" style="left:120px;width:60px;background:#1e9fff">消费明细</span><span class="op" style="left:190px;width:36px;background:#f56c6c">删除</span></div><div class="abs hl" style="left:16px;top:460px;width:1633px"></div><div class="abs c " style="left:16px;top:461px;width:50px;height:50px;line-height:54px"><i class="cb"></i></div><div class="abs c " style="left:66px;top:461px;width:121px;height:50px;line-height:54px">20</div><div class="abs c mut" style="left:187px;top:461px;width:121px;height:50px;line-height:54px">无</div><div class="abs c mut" style="left:308px;top:461px;width:121px;height:50px;line-height:54px">无</div><div class="abs c num" style="left:429px;top:461px;width:121px;height:50px;line-height:54px">拉面</div><div class="abs c num" style="left:550px;top:461px;width:121px;height:50px;line-height:54px">13427418226</div><div class="abs c " style="left:671px;top:461px;width:121px;height:50px;line-height:54px">打手</div><div class="abs c " style="left:792px;top:461px;width:121px;height:50px;line-height:54px"><span class="abs" style="left:40px;top:8px"><svg width="40" height="40" viewBox="0 0 40 40"><rect width="40" height="40" fill="#ffffff"/><g fill="none" stroke="#5a5a5a" stroke-width="0.55" stroke-linecap="round"><path d="M1.5 21 Q-0.5 7 11 1.5 Q23 -1.5 26.5 9 Q28 16 25 22.5"/><path d="M11 1.5 Q7 8 6.5 17 M14 2 Q11 10 11.5 16 M18 2.5 Q19.5 9 23.5 14 M8.5 4 Q3.5 10 3.5 19 M21.5 3.5 Q25.5 8 25.5 15 M16 2 Q15 8 16.5 13 M5.5 7 Q2.5 13 2.5 21 M24 7 Q27 12 26 19 M12.5 5 Q9.5 11 9 17 M20 5 Q22 10 24.5 16"/><path d="M4.5 18 Q4 24 7 27.5 Q10 31.5 14 31.5 Q19 30.5 23 24"/><path d="M1.5 21 Q1.5 26 4 28 M2.5 19 Q3 24 5 26"/><path d="M9.5 17.2 Q12 15.8 14.5 17.2 M17.5 17 Q20 15.8 22.5 17.2" stroke="#2a2a2a" stroke-width="0.9"/><path d="M10.5 18.6 Q12 19.4 13.6 18.6 M18.6 18.6 Q20 19.4 21.6 18.6" stroke="#444" stroke-width="0.7"/><path d="M15.3 23 L16.2 23.6 M13 26.4 Q15 27.4 17 26.4"/><path d="M9 30.5 L8 34 L0 37.5 M20 30.5 L22 34 L29 38.5 M24 35.5 L27.5 40"/><path d="M8 34 L13 38 L15 35 L18 38 L22 34 M3 37 L5 40 M10 36 L11 40"/></g><path d="M11.5 37.5 L15 35 L18.5 37.5 L17.5 40 L12.5 40 Z" fill="#1e1e1e"/><path d="M0 36.5 L2.2 35.5 L2.2 40 L0 40Z" fill="#1e1e1e"/></svg></span></div><div class="abs c inc" style="left:913px;top:461px;width:121px;height:50px;line-height:54px">¥0.00</div><div class="abs c num" style="left:1034px;top:461px;width:121px;height:50px;line-height:54px">0.00</div><div class="abs c " style="left:1155px;top:461px;width:121px;height:50px;line-height:54px">启用</div><div class="abs c num2" style="left:1276px;top:461px;width:121px;height:50px;line-height:54px"><span style="position:relative;left:-2px">2026-01-26 ...</span></div><div class="abs c " style="left:1397px;top:461px;width:252px;height:50px;line-height:54px"><span class="op" style="left:28px;width:36px;background:#4bb16a">修改</span><span class="op" style="left:74px;width:36px;background:#1e9fff">余额</span><span class="op" style="left:120px;width:60px;background:#1e9fff">消费明细</span><span class="op" style="left:190px;width:36px;background:#f56c6c">删除</span></div><div class="abs hl" style="left:16px;top:511px;width:1633px"></div><div class="abs c " style="left:16px;top:512px;width:50px;height:50px;line-height:54px"><i class="cb"></i></div><div class="abs c " style="left:66px;top:512px;width:121px;height:50px;line-height:54px">19</div><div class="abs c mut" style="left:187px;top:512px;width:121px;height:50px;line-height:54px">无</div><div class="abs c mut" style="left:308px;top:512px;width:121px;height:50px;line-height:54px">无</div><div class="abs c num" style="left:429px;top:512px;width:121px;height:50px;line-height:54px">用户2322</div><div class="abs c num" style="left:550px;top:512px;width:121px;height:50px;line-height:54px">19975992322</div><div class="abs c " style="left:671px;top:512px;width:121px;height:50px;line-height:54px">普通用户</div><div class="abs c " style="left:792px;top:512px;width:121px;height:50px;line-height:54px"><span class="abs" style="left:41px;top:8px"><svg class="" width="40" height="40" viewBox="0 0 40 40"><defs><linearGradient id="lg5" x1="0" y1="0" x2="1" y2="1"><stop offset="0" stop-color="#969696"/><stop offset="0.25" stop-color="#bababa"/><stop offset="0.44" stop-color="#ededed"/><stop offset="0.56" stop-color="#f1f1f1"/><stop offset="0.76" stop-color="#a2a2a2"/><stop offset="1" stop-color="#aaaaaa"/></linearGradient></defs><rect width="40" height="40" fill="url(#lg5)"/><path d="M27.5 0H40V12Z" fill="#fff" opacity="0.6"/><path d="M9.4 7 L18.2 11.2 V16.4 L19.8 17.9 L21.4 16.4 V11.2 L30.2 7 L27.7 11.6 V17.3 L28.4 18.3 L19.8 23.8 L11.2 18.3 L11.9 17.3 V11.6 Z" fill="#0e0c07" stroke="#6b5d3a" stroke-width="0.4"/><path d="M14.8 12.2 V17.5 L19.8 20.9 L24.8 17.5 V12.2" fill="none" stroke="#efe9d8" stroke-width="1.05"/><text x="20" y="33.3" text-anchor="middle" font-family="Noto Sans CJK SC, sans-serif" font-weight="900" font-size="8" textLength="36" lengthAdjust="spacingAndGlyphs" fill="#100d07">小樱电竞</text></svg></span></div><div class="abs c inc" style="left:913px;top:512px;width:121px;height:50px;line-height:54px">¥0.00</div><div class="abs c num" style="left:1034px;top:512px;width:121px;height:50px;line-height:54px">0.00</div><div class="abs c " style="left:1155px;top:512px;width:121px;height:50px;line-height:54px">启用</div><div class="abs c num2" style="left:1276px;top:512px;width:121px;height:50px;line-height:54px"><span style="position:relative;left:-2px">2026-01-26 ...</span></div><div class="abs c " style="left:1397px;top:512px;width:252px;height:50px;line-height:54px"><span class="op" style="left:28px;width:36px;background:#4bb16a">修改</span><span class="op" style="left:74px;width:36px;background:#1e9fff">余额</span><span class="op" style="left:120px;width:60px;background:#1e9fff">消费明细</span><span class="op" style="left:190px;width:36px;background:#f56c6c">删除</span></div><div class="abs hl" style="left:16px;top:562px;width:1633px"></div><div class="abs c " style="left:16px;top:563px;width:50px;height:50px;line-height:54px"><i class="cb"></i></div><div class="abs c " style="left:66px;top:563px;width:121px;height:50px;line-height:54px">18</div><div class="abs c mut" style="left:187px;top:563px;width:121px;height:50px;line-height:54px">无</div><div class="abs c mut" style="left:308px;top:563px;width:121px;height:50px;line-height:54px">无</div><div class="abs c num" style="left:429px;top:563px;width:121px;height:50px;line-height:54px">用户9167</div><div class="abs c num" style="left:550px;top:563px;width:121px;height:50px;line-height:54px">19384919167</div><div class="abs c " style="left:671px;top:563px;width:121px;height:50px;line-height:54px">普通用户</div><div class="abs c " style="left:792px;top:563px;width:121px;height:50px;line-height:54px"><span class="abs" style="left:41px;top:8px"><svg class="" width="40" height="40" viewBox="0 0 40 40"><defs><linearGradient id="lg6" x1="0" y1="0" x2="1" y2="1"><stop offset="0" stop-color="#969696"/><stop offset="0.25" stop-color="#bababa"/><stop offset="0.44" stop-color="#ededed"/><stop offset="0.56" stop-color="#f1f1f1"/><stop offset="0.76" stop-color="#a2a2a2"/><stop offset="1" stop-color="#aaaaaa"/></linearGradient></defs><rect width="40" height="40" fill="url(#lg6)"/><path d="M27.5 0H40V12Z" fill="#fff" opacity="0.6"/><path d="M9.4 7 L18.2 11.2 V16.4 L19.8 17.9 L21.4 16.4 V11.2 L30.2 7 L27.7 11.6 V17.3 L28.4 18.3 L19.8 23.8 L11.2 18.3 L11.9 17.3 V11.6 Z" fill="#0e0c07" stroke="#6b5d3a" stroke-width="0.4"/><path d="M14.8 12.2 V17.5 L19.8 20.9 L24.8 17.5 V12.2" fill="none" stroke="#efe9d8" stroke-width="1.05"/><text x="20" y="33.3" text-anchor="middle" font-family="Noto Sans CJK SC, sans-serif" font-weight="900" font-size="8" textLength="36" lengthAdjust="spacingAndGlyphs" fill="#100d07">小樱电竞</text></svg></span></div><div class="abs c inc" style="left:913px;top:563px;width:121px;height:50px;line-height:54px">¥0.00</div><div class="abs c num" style="left:1034px;top:563px;width:121px;height:50px;line-height:54px">0.00</div><div class="abs c " style="left:1155px;top:563px;width:121px;height:50px;line-height:54px">启用</div><div class="abs c num2" style="left:1276px;top:563px;width:121px;height:50px;line-height:54px"><span style="position:relative;left:-2px">2026-01-26 ...</span></div><div class="abs c " style="left:1397px;top:563px;width:252px;height:50px;line-height:54px"><span class="op" style="left:28px;width:36px;background:#4bb16a">修改</span><span class="op" style="left:74px;width:36px;background:#1e9fff">余额</span><span class="op" style="left:120px;width:60px;background:#1e9fff">消费明细</span><span class="op" style="left:190px;width:36px;background:#f56c6c">删除</span></div><div class="abs hl" style="left:16px;top:613px;width:1633px"></div><div class="abs c " style="left:16px;top:614px;width:50px;height:50px;line-height:54px"><i class="cb"></i></div><div class="abs c " style="left:66px;top:614px;width:121px;height:50px;line-height:54px">17</div><div class="abs c mut" style="left:187px;top:614px;width:121px;height:50px;line-height:54px">无</div><div class="abs c mut" style="left:308px;top:614px;width:121px;height:50px;line-height:54px">无</div><div class="abs c num" style="left:429px;top:614px;width:121px;height:50px;line-height:54px">用户2662</div><div class="abs c num" style="left:550px;top:614px;width:121px;height:50px;line-height:54px">15099672662</div><div class="abs c " style="left:671px;top:614px;width:121px;height:50px;line-height:54px">打手</div><div class="abs c " style="left:792px;top:614px;width:121px;height:50px;line-height:54px"><span class="abs" style="left:41px;top:8px"><svg class="" width="40" height="40" viewBox="0 0 40 40"><defs><linearGradient id="lg7" x1="0" y1="0" x2="1" y2="1"><stop offset="0" stop-color="#969696"/><stop offset="0.25" stop-color="#bababa"/><stop offset="0.44" stop-color="#ededed"/><stop offset="0.56" stop-color="#f1f1f1"/><stop offset="0.76" stop-color="#a2a2a2"/><stop offset="1" stop-color="#aaaaaa"/></linearGradient></defs><rect width="40" height="40" fill="url(#lg7)"/><path d="M27.5 0H40V12Z" fill="#fff" opacity="0.6"/><path d="M9.4 7 L18.2 11.2 V16.4 L19.8 17.9 L21.4 16.4 V11.2 L30.2 7 L27.7 11.6 V17.3 L28.4 18.3 L19.8 23.8 L11.2 18.3 L11.9 17.3 V11.6 Z" fill="#0e0c07" stroke="#6b5d3a" stroke-width="0.4"/><path d="M14.8 12.2 V17.5 L19.8 20.9 L24.8 17.5 V12.2" fill="none" stroke="#efe9d8" stroke-width="1.05"/><text x="20" y="33.3" text-anchor="middle" font-family="Noto Sans CJK SC, sans-serif" font-weight="900" font-size="8" textLength="36" lengthAdjust="spacingAndGlyphs" fill="#100d07">小樱电竞</text></svg></span></div><div class="abs c inc" style="left:913px;top:614px;width:121px;height:50px;line-height:54px">¥0.00</div><div class="abs c num" style="left:1034px;top:614px;width:121px;height:50px;line-height:54px">0.00</div><div class="abs c " style="left:1155px;top:614px;width:121px;height:50px;line-height:54px">启用</div><div class="abs c num2" style="left:1276px;top:614px;width:121px;height:50px;line-height:54px"><span style="position:relative;left:-2px">2026-01-26 ...</span></div><div class="abs c " style="left:1397px;top:614px;width:252px;height:50px;line-height:54px"><span class="op" style="left:28px;width:36px;background:#4bb16a">修改</span><span class="op" style="left:74px;width:36px;background:#1e9fff">余额</span><span class="op" style="left:120px;width:60px;background:#1e9fff">消费明细</span><span class="op" style="left:190px;width:36px;background:#f56c6c">删除</span></div><div class="abs hl" style="left:16px;top:664px;width:1633px"></div><div class="abs c " style="left:16px;top:665px;width:50px;height:50px;line-height:54px"><i class="cb"></i></div><div class="abs c " style="left:66px;top:665px;width:121px;height:50px;line-height:54px">16</div><div class="abs c mut" style="left:187px;top:665px;width:121px;height:50px;line-height:54px">无</div><div class="abs c mut" style="left:308px;top:665px;width:121px;height:50px;line-height:54px">无</div><div class="abs c num" style="left:429px;top:665px;width:121px;height:50px;line-height:54px">用户9544</div><div class="abs c num" style="left:550px;top:665px;width:121px;height:50px;line-height:54px">19283109544</div><div class="abs c " style="left:671px;top:665px;width:121px;height:50px;line-height:54px">打手</div><div class="abs c " style="left:792px;top:665px;width:121px;height:50px;line-height:54px"><span class="abs" style="left:41px;top:8px"><svg class="" width="40" height="40" viewBox="0 0 40 40"><defs><linearGradient id="lg8" x1="0" y1="0" x2="1" y2="1"><stop offset="0" stop-color="#969696"/><stop offset="0.25" stop-color="#bababa"/><stop offset="0.44" stop-color="#ededed"/><stop offset="0.56" stop-color="#f1f1f1"/><stop offset="0.76" stop-color="#a2a2a2"/><stop offset="1" stop-color="#aaaaaa"/></linearGradient></defs><rect width="40" height="40" fill="url(#lg8)"/><path d="M27.5 0H40V12Z" fill="#fff" opacity="0.6"/><path d="M9.4 7 L18.2 11.2 V16.4 L19.8 17.9 L21.4 16.4 V11.2 L30.2 7 L27.7 11.6 V17.3 L28.4 18.3 L19.8 23.8 L11.2 18.3 L11.9 17.3 V11.6 Z" fill="#0e0c07" stroke="#6b5d3a" stroke-width="0.4"/><path d="M14.8 12.2 V17.5 L19.8 20.9 L24.8 17.5 V12.2" fill="none" stroke="#efe9d8" stroke-width="1.05"/><text x="20" y="33.3" text-anchor="middle" font-family="Noto Sans CJK SC, sans-serif" font-weight="900" font-size="8" textLength="36" lengthAdjust="spacingAndGlyphs" fill="#100d07">小樱电竞</text></svg></span></div><div class="abs c inc" style="left:913px;top:665px;width:121px;height:50px;line-height:54px">¥0.00</div><div class="abs c num" style="left:1034px;top:665px;width:121px;height:50px;line-height:54px">0.00</div><div class="abs c " style="left:1155px;top:665px;width:121px;height:50px;line-height:54px">启用</div><div class="abs c num2" style="left:1276px;top:665px;width:121px;height:50px;line-height:54px"><span style="position:relative;left:-2px">2026-01-26 ...</span></div><div class="abs c " style="left:1397px;top:665px;width:252px;height:50px;line-height:54px"><span class="op" style="left:28px;width:36px;background:#4bb16a">修改</span><span class="op" style="left:74px;width:36px;background:#1e9fff">余额</span><span class="op" style="left:120px;width:60px;background:#1e9fff">消费明细</span><span class="op" style="left:190px;width:36px;background:#f56c6c">删除</span></div><div class="abs hl" style="left:16px;top:715px;width:1633px"></div><div class="abs c " style="left:16px;top:716px;width:50px;height:50px;line-height:54px"><i class="cb"></i></div><div class="abs c " style="left:66px;top:716px;width:121px;height:50px;line-height:54px">15</div><div class="abs c mut" style="left:187px;top:716px;width:121px;height:50px;line-height:54px">无</div><div class="abs c mut" style="left:308px;top:716px;width:121px;height:50px;line-height:54px">无</div><div class="abs c num" style="left:429px;top:716px;width:121px;height:50px;line-height:54px">少雨</div><div class="abs c num" style="left:550px;top:716px;width:121px;height:50px;line-height:54px">17816287755</div><div class="abs c " style="left:671px;top:716px;width:121px;height:50px;line-height:54px">打手</div><div class="abs c " style="left:792px;top:716px;width:121px;height:50px;line-height:54px"><span class="abs" style="left:44px;top:8px"><svg width="33" height="40" viewBox="0 0 33 40"><defs><filter id="blP" x="-5%" y="-5%" width="110%" height="110%"><feGaussianBlur stdDeviation="0.35"/></filter></defs><rect width="33" height="40" fill="#fbf9fa"/><g filter="url(#blP)"><path d="M9.5 10 Q9 22 16.5 25.5 Q24 22 23.5 10 Z" fill="#ecd2cb"/><path d="M7.5 13.5 Q5.5 0.5 16.5 0.5 Q27.5 0.5 25.8 13.5 L24.5 14 Q24.8 11.5 23 10.8 Q16 12.8 10.5 11.2 Q8.6 11.6 8.8 14 Z" fill="#17151a"/><ellipse cx="13.2" cy="14.6" rx="1.5" ry="0.75" fill="#3c2e30"/><ellipse cx="20.2" cy="14.6" rx="1.5" ry="0.75" fill="#3c2e30"/><path d="M16 18.6 L17.3 18.8" stroke="#cfa9a2" stroke-width="0.7"/><path d="M15 20.8 Q16.7 21.6 18.4 20.8" stroke="#c07f80" stroke-width="0.9" fill="none"/><path d="M13 23 L13 27.5 L20.5 27.5 L20.5 23 Q16.5 26.5 13 23Z" fill="#e3c4bc"/><path d="M-1 33 Q2 28 12 25.2 L16.5 29 L21 25.2 Q31 28 34 33 L34 41 L-1 41Z" fill="#1b1b22"/><path d="M12.2 25.4 L16.5 28.6 L20.8 25.4 L19.8 40 L13.2 40Z" fill="#f3f3f6"/><path d="M15.2 28.6 L17.8 28.6 L18.8 40 L14.2 40Z" fill="#2a2a33"/></g></svg></span></div><div class="abs c inc" style="left:913px;top:716px;width:121px;height:50px;line-height:54px">¥0.00</div><div class="abs c num" style="left:1034px;top:716px;width:121px;height:50px;line-height:54px">0.00</div><div class="abs c " style="left:1155px;top:716px;width:121px;height:50px;line-height:54px">启用</div><div class="abs c num2" style="left:1276px;top:716px;width:121px;height:50px;line-height:54px"><span style="position:relative;left:-2px">2026-01-26 ...</span></div><div class="abs c " style="left:1397px;top:716px;width:252px;height:50px;line-height:54px"><span class="op" style="left:28px;width:36px;background:#4bb16a">修改</span><span class="op" style="left:74px;width:36px;background:#1e9fff">余额</span><span class="op" style="left:120px;width:60px;background:#1e9fff">消费明细</span><span class="op" style="left:190px;width:36px;background:#f56c6c">删除</span></div><div class="abs hl" style="left:16px;top:766px;width:1633px"></div></div>
  </div>
  <div id="sbar"><svg class="abs" style="left:3px;top:7px" width="9" height="6" viewBox="0 0 9 6"><path d="M4.5 0L9 6H0Z" fill="#8b8b8b"/></svg><div class="thumb"></div><svg class="abs" style="left:3px;top:762px" width="9" height="6" viewBox="0 0 9 6"><path d="M0 0H9L4.5 6Z" fill="#8b8b8b"/></svg></div>
</div>
<div class="annot" style="left:1px;top:165px;width:201px;height:96px;border-radius:5px"></div><div class="annot" style="left:299px;top:330px;width:109px;height:536px;border-radius:4px"></div>
</body>
</html>
